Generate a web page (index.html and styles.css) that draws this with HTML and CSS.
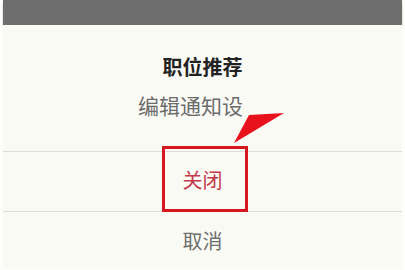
FILE: index.html
```html
<!DOCTYPE html>
<html lang="zh-CN">
<head>
  <meta charset="UTF-8">
  <meta name="viewport" content="width=device-width, initial-scale=1.0">
  <title>职位推荐</title>
  <link rel="stylesheet" href="styles.css">
</head>
<body>
  <div class="topbar"></div>
  <div class="sheet">
    <div class="sheet-head">
      <div class="sheet-title">职位推荐</div>
      <div class="sheet-sub">编辑通知设</div>
    </div>
    <div class="sheet-row danger">关闭</div>
    <div class="sheet-row cancel">取消</div>
  </div>

  <!-- annotation overlay -->
  <div class="mark-box"></div>
  <svg class="mark-arrow" width="405" height="270" viewBox="0 0 405 270">
    <path d="M234 143 L249 115 L284 113 Z" fill="#e8121c"/>
  </svg>
</body>
</html>
```

FILE: styles.css
```css
body {
  margin: 0;
  background-color: #fdfdf9;
  font-family: "Noto Sans CJK SC", "Noto Sans", sans-serif;
  width: 405px;
  height: 270px;
  overflow: hidden;
  position: relative;
}
.topbar {
  height: 25px;
  margin: 0 3px;
  background-color: #6e6e6e;
  box-shadow: 0 2px 2px rgba(0, 0, 0, 0.25);
}
.sheet {
  margin: 0 3px;
  background-color: #fafaf4;
}
.sheet-head {
  padding: 29px 0 33px;
  text-align: center;
}
.sheet-title {
  font-size: 20px;
  line-height: 25px;
  font-weight: bold;
  color: #222;
}
.sheet-sub {
  margin-top: 13px;
  padding-right: 24px;
  font-size: 21px;
  line-height: 26px;
  color: #6c6c6c;
}
.sheet-row {
  border-top: 1px solid #dcdcd8;
  display: flex;
  align-items: center;
  justify-content: center;
  font-size: 20px;
}
.sheet-row.danger {
  height: 60px;
  padding-bottom: 4px;
  box-sizing: border-box;
  color: #c2394a;
}
.sheet-row.cancel {
  height: 57px;
  color: #6e6e6e;
}
.mark-box {
  position: absolute;
  left: 162px;
  top: 146px;
  width: 86px;
  height: 66px;
  box-sizing: border-box;
  border: 3px solid #d8161f;
}
.mark-arrow {
  position: absolute;
  left: 0;
  top: 0;
}
```
